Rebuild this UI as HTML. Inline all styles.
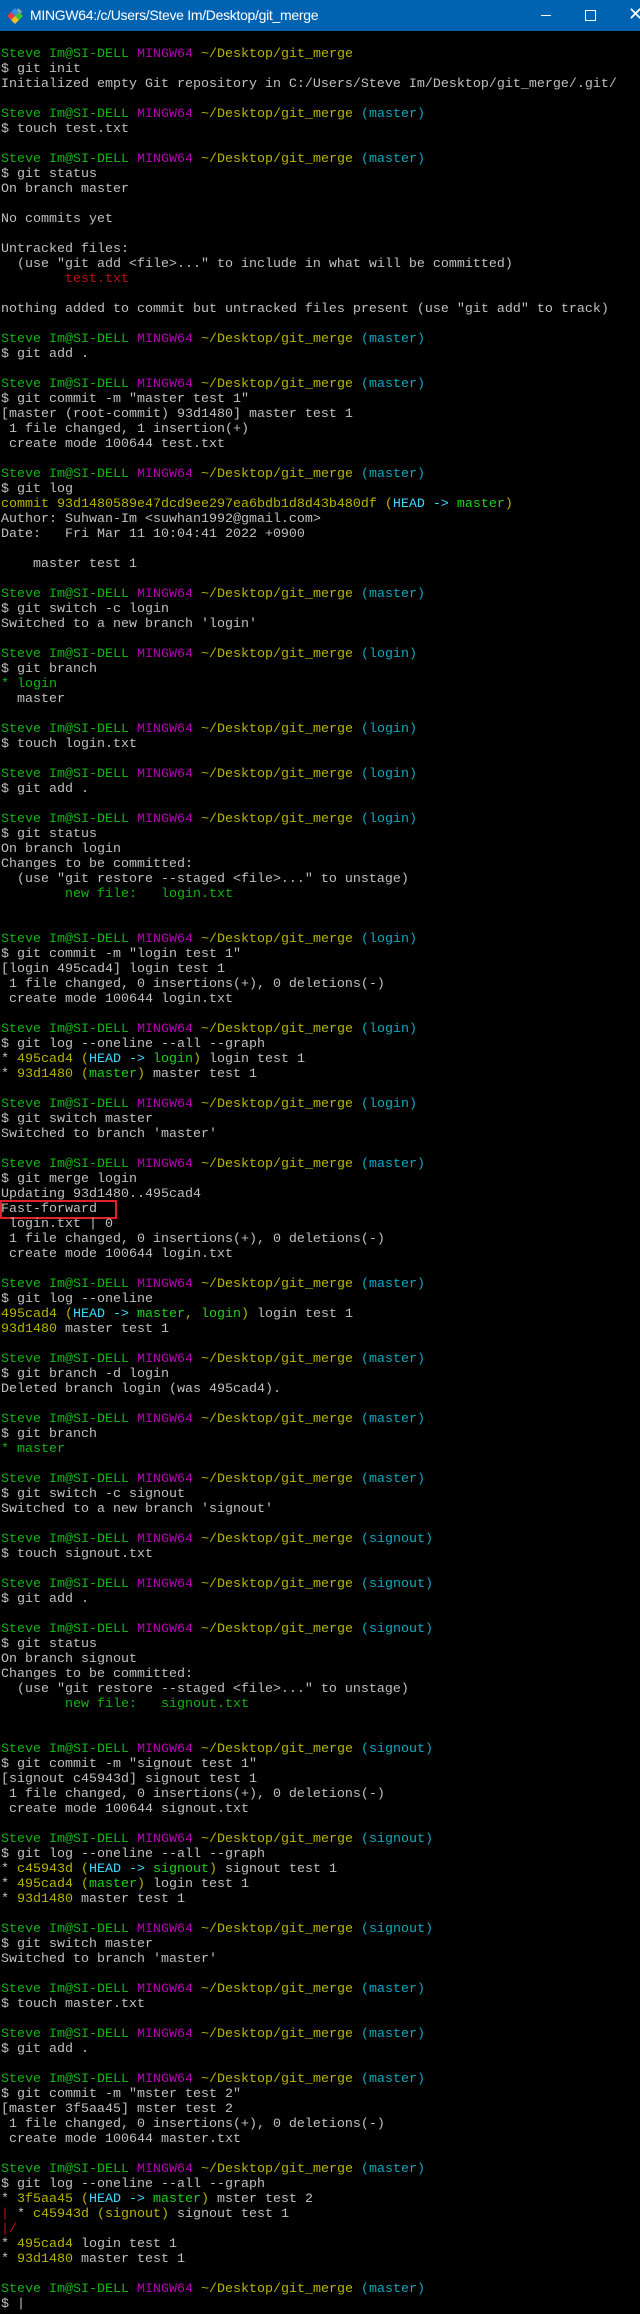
<!DOCTYPE html>
<html><head><meta charset="utf-8"><style>
html,body{margin:0;padding:0;background:#000;width:640px;height:2314px;overflow:hidden}
.tb{position:absolute;left:0;top:0;width:640px;height:31px;background:#0063b1}
.tb .t{position:absolute;left:30px;top:7px;color:#fff;font:14px "Liberation Sans",sans-serif;letter-spacing:-0.3px}
.tb .min{position:absolute;left:541px;top:15px;width:10px;height:1px;background:#fff}
.tb .max{position:absolute;left:585px;top:10px;width:9px;height:9px;border:1px solid #fff}
.tb .x{position:absolute;left:628px;top:4px;color:#fff;font:18px "Liberation Sans",sans-serif}
pre{position:absolute;left:1px;top:47px;margin:0;font-family:"Liberation Mono",monospace;font-size:13.33px;line-height:15px;color:#c0c0c0}
.g{color:#14b414}.m{color:#b400b4}.y{color:#bab400}.c{color:#10a8c0}.r{color:#c01010}.hc{color:#40d8ff}.bg{color:#20d020}
.box{position:absolute;left:0;top:1200px;width:113px;height:15px;border:2px solid #e0202a}
</style></head><body>
<div class="tb">
<svg style="position:absolute;left:6px;top:7px" width="18" height="18" viewBox="0 0 18 18">
<rect x="6" y="1" width="5" height="5" fill="#a0a0a0" transform="rotate(45 9 9)"/>
<polygon points="9,1 13,5 9,9 5,5" fill="#3a8ee6"/><polygon points="1,9 5,5 9,9 5,13" fill="#e04040"/><polygon points="9,9 13,5 17,9 13,13" fill="#40c040"/><polygon points="5,13 9,9 13,13 9,17" fill="#f0c020"/></svg>
<div class="t">MINGW64:/c/Users/Steve Im/Desktop/git_merge</div>
<div class="min"></div><div class="max"></div><div class="x">✕</div>
</div>
<div class="box"></div>
<pre><span class="g">Steve Im@SI-DELL</span> <span class="m">MINGW64</span> <span class="y">~/Desktop/git_merge</span>
$ git init
Initialized empty Git repository in C:/Users/Steve Im/Desktop/git_merge/.git/

<span class="g">Steve Im@SI-DELL</span> <span class="m">MINGW64</span> <span class="y">~/Desktop/git_merge</span> <span class="c">(master)</span>
$ touch test.txt

<span class="g">Steve Im@SI-DELL</span> <span class="m">MINGW64</span> <span class="y">~/Desktop/git_merge</span> <span class="c">(master)</span>
$ git status
On branch master

No commits yet

Untracked files:
  (use "git add &lt;file&gt;..." to include in what will be committed)
        <span class="r">test.txt</span>

nothing added to commit but untracked files present (use "git add" to track)

<span class="g">Steve Im@SI-DELL</span> <span class="m">MINGW64</span> <span class="y">~/Desktop/git_merge</span> <span class="c">(master)</span>
$ git add .

<span class="g">Steve Im@SI-DELL</span> <span class="m">MINGW64</span> <span class="y">~/Desktop/git_merge</span> <span class="c">(master)</span>
$ git commit -m "master test 1"
[master (root-commit) 93d1480] master test 1
 1 file changed, 1 insertion(+)
 create mode 100644 test.txt

<span class="g">Steve Im@SI-DELL</span> <span class="m">MINGW64</span> <span class="y">~/Desktop/git_merge</span> <span class="c">(master)</span>
$ git log
<span class="y">commit 93d1480589e47dcd9ee297ea6bdb1d8d43b480df (</span><span class="hc">HEAD -&gt; </span><span class="bg">master</span><span class="y">)</span>
Author: Suhwan-Im &lt;suwhan1992@gmail.com&gt;
Date:   Fri Mar 11 10:04:41 2022 +0900

    master test 1

<span class="g">Steve Im@SI-DELL</span> <span class="m">MINGW64</span> <span class="y">~/Desktop/git_merge</span> <span class="c">(master)</span>
$ git switch -c login
Switched to a new branch 'login'

<span class="g">Steve Im@SI-DELL</span> <span class="m">MINGW64</span> <span class="y">~/Desktop/git_merge</span> <span class="c">(login)</span>
$ git branch
<span class="g">* login</span>
  master

<span class="g">Steve Im@SI-DELL</span> <span class="m">MINGW64</span> <span class="y">~/Desktop/git_merge</span> <span class="c">(login)</span>
$ touch login.txt

<span class="g">Steve Im@SI-DELL</span> <span class="m">MINGW64</span> <span class="y">~/Desktop/git_merge</span> <span class="c">(login)</span>
$ git add .

<span class="g">Steve Im@SI-DELL</span> <span class="m">MINGW64</span> <span class="y">~/Desktop/git_merge</span> <span class="c">(login)</span>
$ git status
On branch login
Changes to be committed:
  (use "git restore --staged &lt;file&gt;..." to unstage)
        <span class="g">new file:   login.txt</span>


<span class="g">Steve Im@SI-DELL</span> <span class="m">MINGW64</span> <span class="y">~/Desktop/git_merge</span> <span class="c">(login)</span>
$ git commit -m "login test 1"
[login 495cad4] login test 1
 1 file changed, 0 insertions(+), 0 deletions(-)
 create mode 100644 login.txt

<span class="g">Steve Im@SI-DELL</span> <span class="m">MINGW64</span> <span class="y">~/Desktop/git_merge</span> <span class="c">(login)</span>
$ git log --oneline --all --graph
* <span class="y">495cad4 (</span><span class="hc">HEAD -&gt; </span><span class="bg">login</span><span class="y">)</span> login test 1
* <span class="y">93d1480 (</span><span class="bg">master</span><span class="y">)</span> master test 1

<span class="g">Steve Im@SI-DELL</span> <span class="m">MINGW64</span> <span class="y">~/Desktop/git_merge</span> <span class="c">(login)</span>
$ git switch master
Switched to branch 'master'

<span class="g">Steve Im@SI-DELL</span> <span class="m">MINGW64</span> <span class="y">~/Desktop/git_merge</span> <span class="c">(master)</span>
$ git merge login
Updating 93d1480..495cad4
Fast-forward
 login.txt | 0
 1 file changed, 0 insertions(+), 0 deletions(-)
 create mode 100644 login.txt

<span class="g">Steve Im@SI-DELL</span> <span class="m">MINGW64</span> <span class="y">~/Desktop/git_merge</span> <span class="c">(master)</span>
$ git log --oneline
<span class="y">495cad4 (</span><span class="hc">HEAD -&gt; </span><span class="bg">master</span><span class="y">, </span><span class="bg">login</span><span class="y">)</span> login test 1
<span class="y">93d1480</span> master test 1

<span class="g">Steve Im@SI-DELL</span> <span class="m">MINGW64</span> <span class="y">~/Desktop/git_merge</span> <span class="c">(master)</span>
$ git branch -d login
Deleted branch login (was 495cad4).

<span class="g">Steve Im@SI-DELL</span> <span class="m">MINGW64</span> <span class="y">~/Desktop/git_merge</span> <span class="c">(master)</span>
$ git branch
<span class="g">* master</span>

<span class="g">Steve Im@SI-DELL</span> <span class="m">MINGW64</span> <span class="y">~/Desktop/git_merge</span> <span class="c">(master)</span>
$ git switch -c signout
Switched to a new branch 'signout'

<span class="g">Steve Im@SI-DELL</span> <span class="m">MINGW64</span> <span class="y">~/Desktop/git_merge</span> <span class="c">(signout)</span>
$ touch signout.txt

<span class="g">Steve Im@SI-DELL</span> <span class="m">MINGW64</span> <span class="y">~/Desktop/git_merge</span> <span class="c">(signout)</span>
$ git add .

<span class="g">Steve Im@SI-DELL</span> <span class="m">MINGW64</span> <span class="y">~/Desktop/git_merge</span> <span class="c">(signout)</span>
$ git status
On branch signout
Changes to be committed:
  (use "git restore --staged &lt;file&gt;..." to unstage)
        <span class="g">new file:   signout.txt</span>


<span class="g">Steve Im@SI-DELL</span> <span class="m">MINGW64</span> <span class="y">~/Desktop/git_merge</span> <span class="c">(signout)</span>
$ git commit -m "signout test 1"
[signout c45943d] signout test 1
 1 file changed, 0 insertions(+), 0 deletions(-)
 create mode 100644 signout.txt

<span class="g">Steve Im@SI-DELL</span> <span class="m">MINGW64</span> <span class="y">~/Desktop/git_merge</span> <span class="c">(signout)</span>
$ git log --oneline --all --graph
* <span class="y">c45943d (</span><span class="hc">HEAD -&gt; </span><span class="bg">signout</span><span class="y">)</span> signout test 1
* <span class="y">495cad4 (</span><span class="bg">master</span><span class="y">)</span> login test 1
* <span class="y">93d1480</span> master test 1

<span class="g">Steve Im@SI-DELL</span> <span class="m">MINGW64</span> <span class="y">~/Desktop/git_merge</span> <span class="c">(signout)</span>
$ git switch master
Switched to branch 'master'

<span class="g">Steve Im@SI-DELL</span> <span class="m">MINGW64</span> <span class="y">~/Desktop/git_merge</span> <span class="c">(master)</span>
$ touch master.txt

<span class="g">Steve Im@SI-DELL</span> <span class="m">MINGW64</span> <span class="y">~/Desktop/git_merge</span> <span class="c">(master)</span>
$ git add .

<span class="g">Steve Im@SI-DELL</span> <span class="m">MINGW64</span> <span class="y">~/Desktop/git_merge</span> <span class="c">(master)</span>
$ git commit -m "mster test 2"
[master 3f5aa45] mster test 2
 1 file changed, 0 insertions(+), 0 deletions(-)
 create mode 100644 master.txt

<span class="g">Steve Im@SI-DELL</span> <span class="m">MINGW64</span> <span class="y">~/Desktop/git_merge</span> <span class="c">(master)</span>
$ git log --oneline --all --graph
* <span class="y">3f5aa45 (</span><span class="hc">HEAD -&gt; </span><span class="bg">master</span><span class="y">)</span> mster test 2
<span class="r">|</span> * <span class="y">c45943d (</span><span class="bg" style="color:#bab400">signout</span><span class="y">)</span> signout test 1
<span class="r">|/</span>
* <span class="y">495cad4</span> login test 1
* <span class="y">93d1480</span> master test 1

<span class="g">Steve Im@SI-DELL</span> <span class="m">MINGW64</span> <span class="y">~/Desktop/git_merge</span> <span class="c">(master)</span>
$ |</pre>
</body></html>
